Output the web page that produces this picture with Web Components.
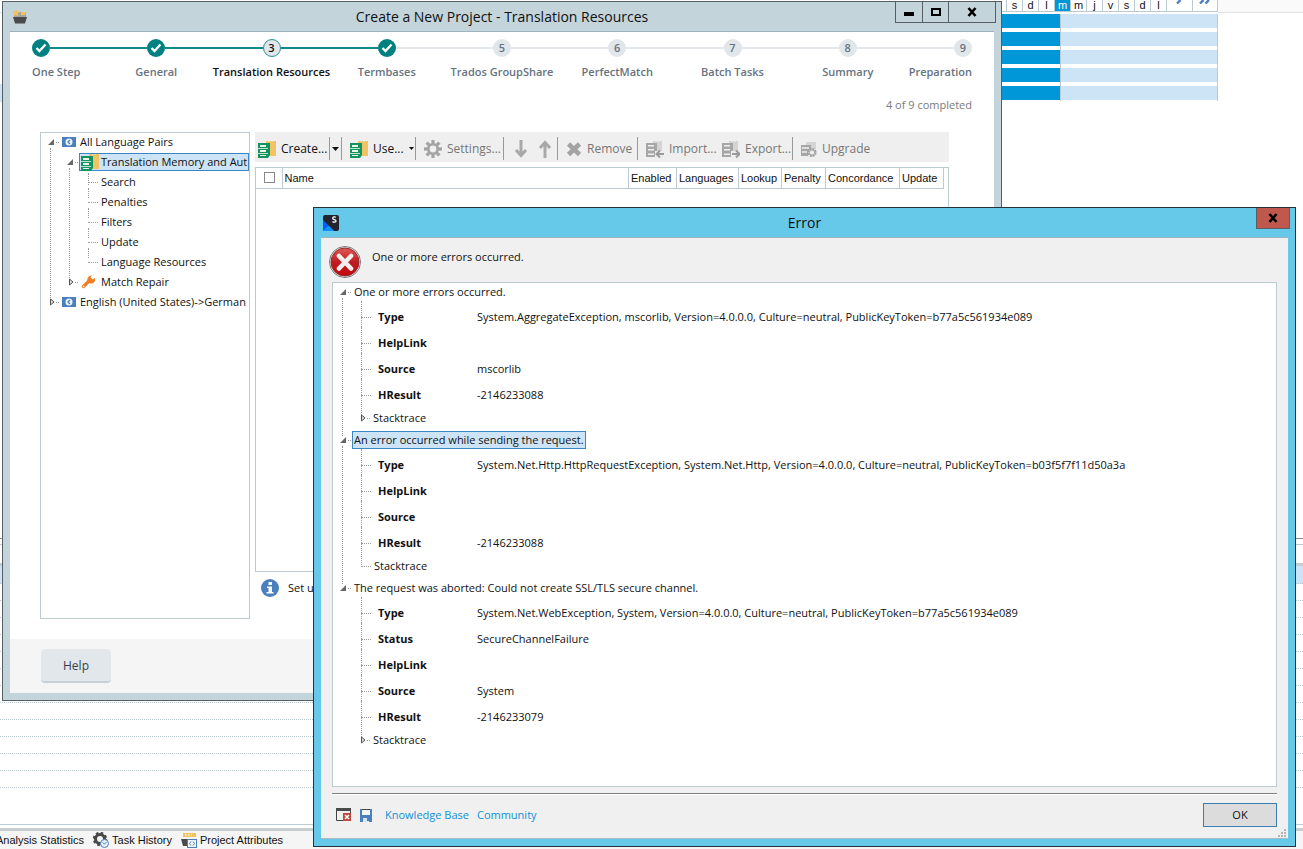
<!DOCTYPE html>
<html lang="en">
<head>
<meta charset="utf-8">
<title>Create a New Project - Translation Resources</title>
<style>
html,body{height:100%}
body{margin:0;overflow:hidden;background:#fff;color:#111;font:11px/20px "Open Sans","Noto Sans",sans-serif}
</style>
</head>
<body>
<work-desk></work-desk>
<script>
const svg = (w, h, body, box) => `<svg width="${w}" height="${h}" viewBox="${box || `0 0 ${w} ${h}`}" aria-hidden="true">${body}</svg>`;

const ICONS = {
  project: svg(16, 15, `<path d="M4 3h10v7H2V5z" fill="#a5a5a5"/><path d="M9 3h5l-1 3H9z" fill="#f2c35b"/><path d="M1 8h14l-2 6.500H3z" fill="#4b4b4b"/><path d="M4 0l1.100 2.400 2.700.3-2 1.800.6 2.700L4 5.900 1.600 7.200l.6-2.700-2-1.800 2.700-.3z" fill="#f2c35b"/>`),
  studio: svg(16, 16, `<rect width="16" height="16" rx="2" fill="#23242f"/><path d="M0 5l11 11H2a2 2 0 0 1-2-2z" fill="#0a5cff"/><path d="M5.500 10.500L11 16H0z" fill="#0a94ff"/>
    <path d="M12.900 2.300C11.700 1.500 9.700 1.700 9.700 3.200c0 1.800 3.300 1 3.300 2.700 0 1.500-2.300 1.500-3.500.7" stroke="#fff" stroke-width="1.300" fill="none"/>`),
  pair: svg(14, 10, `<rect width="14" height="10" fill="#4a80bd"/><circle cx="7" cy="5" r="3.500" fill="#eef3f8"/><path d="M8 3L6 5l2 2" fill="none" stroke="#4a80bd" stroke-width="1.300"/>`),
  memory: svg(18, 18, `<path d="M8 1h2l1 1 1-1h1l1 1 1-1h3v15H8z" fill="#f2c364"/><path d="M0 3h12v12l-2 3H0z" fill="#14935f"/><g fill="#e7f5ee"><rect x="2" y="5" width="6" height="2"/><rect x="2" y="10" width="6" height="2"/><rect x="2" y="15" width="6" height="1"/></g><path d="M0 8.500h10M0 13.500h10" stroke="#bfe3d3" stroke-width="1"/>`),
  wrench: svg(14, 14, `<path d="M2.500 11.500L8.500 5.500" stroke="#ef7d23" stroke-width="3.200" stroke-linecap="round"/><path d="M8 1.600A3.800 3.800 0 0 1 11 .5L9.600 2.600l1.900 1.900L13.700 3A3.800 3.800 0 1 1 8 1.600z" fill="#ef7d23"/><circle cx="2.600" cy="11.400" r=".8" fill="#fff"/>`),
  gear: svg(18, 18, `<g fill="#a3a3a3"><path fill-rule="evenodd" d="M9 3a6 6 0 1 0 0 12A6 6 0 0 0 9 3zm0 2.600a3.400 3.400 0 1 1 0 6.800 3.400 3.400 0 0 1 0-6.800z"/><g><rect x="7.400" y="0" width="3.200" height="4"/><rect x="7.400" y="14" width="3.200" height="4"/></g><g transform="rotate(45 9 9)"><rect x="7.400" y="0" width="3.200" height="4"/><rect x="7.400" y="14" width="3.200" height="4"/></g><g transform="rotate(90 9 9)"><rect x="7.400" y="0" width="3.200" height="4"/><rect x="7.400" y="14" width="3.200" height="4"/></g><g transform="rotate(135 9 9)"><rect x="7.400" y="0" width="3.200" height="4"/><rect x="7.400" y="14" width="3.200" height="4"/></g></g>`),
  down: svg(14, 18, `<path d="M7 0v15M2 10l5 5.500 5-5.500" fill="none" stroke="#a8a8a8" stroke-width="3"/>`),
  up: svg(14, 18, `<path d="M7 18V3M2 8l5-5.500L12 8" fill="none" stroke="#a8a8a8" stroke-width="3"/>`),
  cross: svg(16, 16, `<path d="M2.500 3l11 10.500M13.500 3l-11 10.500" stroke="#a3a3a3" stroke-width="4.600"/>`),
  importTm: svg(18, 18, `<path d="M7 1h2l1 1 1-1h1l1 1 1-1h2v10H7z" fill="#d4d4d4"/><path d="M0 3h11v8H9v6H0z" fill="#a6a6a6"/><g fill="#efefef"><rect x="2" y="5" width="6" height="1.500"/><rect x="2" y="9" width="6" height="1.500"/><rect x="2" y="13.500" width="6" height="1.500"/></g><path d="M18 14h-7M14 10.500L10.500 14l3.500 3.500" fill="none" stroke="#9a9a9a" stroke-width="2"/>`),
  exportTm: svg(18, 18, `<path d="M7 1h2l1 1 1-1h1l1 1 1-1h2v10H7z" fill="#d4d4d4"/><path d="M0 3h11v8H9v6H0z" fill="#a6a6a6"/><g fill="#efefef"><rect x="2" y="5" width="6" height="1.500"/><rect x="2" y="9" width="6" height="1.500"/><rect x="2" y="13.500" width="6" height="1.500"/></g><path d="M10 14h7M14 10.500l3.500 3.500-3.500 3.500" fill="none" stroke="#9a9a9a" stroke-width="2"/>`),
  upgrade: svg(16, 16, `<path d="M5 1h10v7H5z" fill="#d4d4d4"/><path d="M0 4h10v4l-3 3v4H0z" fill="#a6a6a6"/><path d="M1 7h7M1 11h5" stroke="#efefef" stroke-width="1.400"/><circle cx="11" cy="11.500" r="3.600" fill="#efefef" stroke="#a0a0a0" stroke-width="2" stroke-dasharray="2 .8"/><circle cx="11" cy="11.500" r="2.600" fill="#efefef" stroke="#a0a0a0"/>`),
  caret: svg(7, 4, `<path d="M0 0h7L3.500 4z" fill="#111"/>`),
  caretSmall: svg(5, 3, `<path d="M0 0h5L2.500 3z" fill="#111"/>`),
  info: svg(18, 18, `<circle cx="9" cy="9" r="9" fill="#4a80bd"/><g fill="#fff"><rect x="7.500" y="3" width="3.500" height="3"/><path d="M6 7.500h5V13h1.500v1.500h-7V13h2V9H6z"/></g>`),
  tick: svg(18, 18, `<circle cx="9" cy="9" r="9" fill="#008080"/><path d="M4.500 9l3 3 6-6.500" fill="none" stroke="#fff" stroke-width="2.400"/>`),
  error: svg(32, 32, `<defs><linearGradient id="r" x1="0" y1="0" x2="0" y2="1"><stop offset="0" stop-color="#e05a55"/><stop offset=".5" stop-color="#c01c22"/><stop offset="1" stop-color="#c4090c"/></linearGradient></defs><circle cx="16" cy="16" r="15.500" fill="#f4f4f4" stroke="#777"/><circle cx="16" cy="16" r="14" fill="url(#r)" stroke="#8d2a2c"/><path d="M10 10l12 12.500M22 10L10 22.500" stroke="#f3efee" stroke-width="4.600" stroke-linecap="round"/>`),
  report: svg(16, 14, `<path d="M.5 1v11.500H7M14.500 1v4" fill="none" stroke="#444"/><rect width="15" height="3" fill="#4a4a4a"/><rect x="7" y="5" width="8" height="8" fill="#c0453a"/><path d="M9 7l4 4M13 7l-4 4" stroke="#fff" stroke-width="1.500"/>`),
  save: svg(12, 13, `<path d="M0 0h12v13H0z" fill="#4a80bd"/><rect x="2" width="8" height="6" fill="#f6f6f6"/><path d="M2 .5h8" stroke="#444"/><rect x="3" y="9" width="6" height="4" fill="#dce6f1"/><rect x="7" y="9" width="2" height="3" fill="#4a80bd"/>`),
  grip: svg(9, 9, `<g fill="#b4b4b4"><path d="M6 0h2v2H6zM3 3h2v2H3zM6 3h2v2H6zM0 6h2v2H0zM3 6h2v2H3zM6 6h2v2H6z"/></g>`),
  history: svg(16, 16, `<circle cx="7" cy="7" r="4.500" fill="none" stroke="#484848" stroke-width="3"/><circle cx="7" cy="7" r="6" fill="none" stroke="#484848" stroke-width="2.400" stroke-dasharray="2.500 2.200"/><circle cx="11.500" cy="11.500" r="4" fill="#e9f1f9" stroke="#4a80bd"/><path d="M9.500 10.500l2 1.500 2-2" fill="none" stroke="#4a80bd"/>`),
  attributes: svg(16, 16, `<path d="M2 1h13v4H2z" fill="#f2c35b"/><path d="M4 3h7" stroke="#fff" stroke-dasharray="2 1"/><path d="M0 7h6v7H2z" fill="#4b4b4b"/><rect x="6.500" y="7.500" width="9" height="8" fill="#eef4fa" stroke="#4a80bd"/><path d="M10 9.500L8.500 11.500l1.500 2M12 9.500l1.500 2-1.500 2" fill="none" stroke="#4a80bd"/>`),
  next: svg(6, 4, `<path d="M1 3.500L4.500 0" stroke="#4a80bd" stroke-width="2.400"/>`),
  last: svg(12, 4, `<path d="M1 3.500L4.500 0M6.500 3.500L10 0" stroke="#4a80bd" stroke-width="2.400"/>`),
  minus: svg(10, 10, `<rect y="5" width="10" height="4"/>`),
  square: svg(10, 10, `<rect x="1" y="2" width="8" height="6" fill="none" stroke="#000" stroke-width="2"/>`),
  close: svg(10, 10, `<path d="M1.500 1l7 8M8.500 1l-7 8" stroke="#000" stroke-width="2.600"/>`),
  open: svg(7, 6, `<path d="M6 0v6H0z" fill="#666"/>`),
  shut: svg(6, 8, `<path d="M1.500 1v6l3.500-3z" fill="#ddd" stroke="#555"/>`)
};

function define(name, markup, setup) {
  const template = document.createElement('template');
  template.innerHTML = `<style>*{box-sizing:border-box}svg{display:block;flex:none}button{font:inherit;color:inherit}</style>${markup}`;
  customElements.define(name, class extends HTMLElement {
    constructor() {
      super();
      this.attachShadow({ mode: 'open' }).append(template.content.cloneNode(true));
    }
    connectedCallback() {
      if (this.ready) return;
      this.ready = true;
      if (setup) setup(this, this.shadowRoot);
    }
  });
}

define('ui-icon', `<style>:host{display:block;flex:none}</style><span></span>`, (host, root) => {
  root.querySelector('span').innerHTML = ICONS[host.getAttribute('name')] || '';
});

/* Window frame with a title bar and caption buttons */
define('app-window', `
<style>
:host{display:flex;flex-direction:column;box-sizing:border-box;border:1px solid #555f65;background:var(--chrome);padding:0 7px 7px}
header{display:grid;grid-template-columns:1fr auto 1fr;height:29px;flex:none}
h1{margin:0;font-size:14px;line-height:29px;font-weight:400;color:#111;white-space:nowrap}
.logo{padding:7px 2px}
.caption{display:flex;justify-content:flex-end;align-items:flex-start;margin-right:-2px}
.caption button{display:flex;align-items:center;justify-content:center;height:21px;padding:0;border:1px solid #555f65;border-top:0;background:var(--close,transparent);width:28px;margin-left:-1px}
.caption .max{width:27px}
.caption .x{width:var(--x,48px)}
:host([kind=dialog]) .min,:host([kind=dialog]) .max{display:none}
.body{flex:1;display:flex;flex-direction:column;min-height:0;border-top:1px solid #9db3bd;border-bottom:1px solid #aab9bf;background:var(--body)}
</style>
<header><div class="logo"></div><h1></h1>
<div class="caption"><button class="min" aria-label="Minimize"><ui-icon name="minus"></ui-icon></button><button class="max" aria-label="Maximize"><ui-icon name="square"></ui-icon></button><button class="x" aria-label="Close"><ui-icon name="close"></ui-icon></button></div></header>
<div class="body"><slot></slot></div>`, (host, root) => {
  root.querySelector('h1').textContent = host.getAttribute('heading');
  root.querySelector('.logo').innerHTML = `<ui-icon name="${host.getAttribute('icon')}"></ui-icon>`;
});

/* Wizard progress */
define('step-bar', `
<style>
:host{display:block}
ol{display:flex;margin:0;padding:0;list-style:none}
li{width:18px;height:45px;display:flex;flex-direction:column;align-items:center;gap:5px;font-weight:600;color:#66737f;white-space:nowrap}
li:first-of-type{align-items:flex-start}li:last-of-type{align-items:flex-end}
.rail{flex:1;width:auto;height:2px;margin-top:8px;background:#e4e8ec}
.rail.done{background:#0e8a8a}
.dot{width:18px;height:18px;border-radius:50%;background:#e1e6ea;line-height:18px;text-align:center;flex:none}
.now .dot{border:1px solid #2b8f92;line-height:16px}
.now{color:#111}
</style><ol></ol>`, (host, root) => {
  const steps = ['One Step', 'General', 'Translation Resources', 'Termbases', 'Trados GroupShare', 'PerfectMatch', 'Batch Tasks', 'Summary', 'Preparation'];
  root.querySelector('ol').innerHTML = steps.map((s, i) => {
    const done = i < 4 && i !== 2;
    return `${i ? `<div class="rail${i < 4 ? ' done' : ''}" role="presentation"></div>` : ''}<li${i === 2 ? ' class="now" aria-current="step"' : ''}>${done ? ICONS.tick : `<span class="dot">${i + 1}</span>`}<span>${s}</span></li>`;
  }).join('');
});

/* Tree node: toggle, connector, icon slot, label; nested nodes go in the default slot */
define('tree-node', `
<style>
:host{display:block;position:relative;white-space:nowrap;--line:1px dotted #999}
.row{display:flex;align-items:center;height:20px;padding-bottom:2px}
:host([tall]) .row{height:22px;padding-bottom:4px}
:host([leaf]) .row::before{content:"";width:10px;margin:0 1px 0 2px;border-top:var(--line);flex:none}
.toggle{width:7px;height:8px;display:flex;align-items:center;justify-content:center;padding:0;border:0;background:none;flex:none}
.stub{width:3px;margin:0 1px;border-top:var(--line);flex:none}
:host([leaf]) .toggle,:host([leaf]) .stub{display:none}
.mark{display:flex;align-items:center;height:18px;line-height:16px;padding:0 1px;border:1px solid transparent}
:host([selected]) .mark{background:#cde4f7;border-color:#3a87c4}
::slotted([slot=icon]){margin-right:var(--icon-gap,4px)}
.kids{padding-left:19px}
:host(:not([last]))::after{content:"";position:absolute;left:2px;top:15px;bottom:-5px;border-left:var(--line)}
</style>
<div class="row"><button class="toggle"></button><span class="stub"></span><span class="mark"><slot name="icon"></slot><span class="label"></span></span></div>
<div class="kids"><slot></slot></div>`, (host, root) => {
  root.querySelector('.label').textContent = host.getAttribute('label');
  const toggle = root.querySelector('.toggle');
  toggle.innerHTML = ICONS[host.hasAttribute('closed') ? 'shut' : 'open'];
  toggle.setAttribute('aria-label', 'Toggle ' + host.getAttribute('label'));
});

define('resource-tree', `
<style>:host{display:block;box-sizing:border-box;border:1px solid #bccbd2;overflow:hidden;padding-left:7px}
.leaves{position:relative}
.leaves::before{content:"";position:absolute;left:2px;top:0;height:12px;border-left:1px dotted #999}
.wide{--icon-gap:6px}.book{--icon-gap:2px}</style>
<tree-node label="All Language Pairs"><ui-icon slot="icon" name="pair"></ui-icon>
  <tree-node class="book" label="Translation Memory and Aut" selected><ui-icon slot="icon" name="memory"></ui-icon>
    <div class="leaves">
    <tree-node leaf label="Search"></tree-node>
    <tree-node leaf label="Penalties"></tree-node>
    <tree-node leaf label="Filters"></tree-node>
    <tree-node leaf label="Update"></tree-node>
    <tree-node leaf last label="Language Resources"></tree-node>
    </div>
  </tree-node>
  <tree-node class="wide" closed last label="Match Repair"><ui-icon slot="icon" name="wrench"></ui-icon></tree-node>
</tree-node>
<tree-node closed last label="English (United States)-&gt;German"><ui-icon slot="icon" name="pair"></ui-icon></tree-node>`);

define('tool-bar', `
<style>
:host{display:flex;height:30px;background:#efefef;font-size:12px;color:#111}
button{display:flex;align-items:center;gap:5px;padding:3px 0 0 8px;border:0;background:linear-gradient(#999,#999) right 5px/1px 23px no-repeat;white-space:nowrap;line-height:20px}
button:disabled{color:#777}
button.plain{background:none}
.w1{width:75px;padding-left:3px}.w2{width:12px;padding-left:2px}.w3{width:74px}.w4{width:88px}.w5{width:28px;padding-left:10px}.w6{width:26px;padding-left:6px}.w7{width:80px}.w8{width:76px}.w9{width:79px}
</style>
<button class="w1"><ui-icon name="memory"></ui-icon>Create...</button><button class="w2" aria-label="More create options"><ui-icon name="caret"></ui-icon></button>
<button class="w3"><ui-icon name="memory"></ui-icon>Use...<ui-icon name="caretSmall"></ui-icon></button>
<button class="w4" disabled><ui-icon name="gear"></ui-icon>Settings...</button>
<button class="w5 plain" disabled aria-label="Move down"><ui-icon name="down"></ui-icon></button><button class="w6" disabled aria-label="Move up"><ui-icon name="up"></ui-icon></button>
<button class="w7" disabled><ui-icon name="cross"></ui-icon>Remove</button>
<button class="w8 plain" disabled><ui-icon name="importTm"></ui-icon>Import...</button>
<button class="w9" disabled><ui-icon name="exportTm"></ui-icon>Export...</button>
<button class="plain" disabled><ui-icon name="upgrade"></ui-icon>Upgrade</button>`);

define('memory-list', `
<style>
:host{display:block;border:1px solid #bccbd2;padding-right:4px;font:11px/20px "Liberation Sans",sans-serif}
table{width:100%;table-layout:fixed;border-collapse:collapse}
th{height:20px;padding:0 0 0 2px;font-weight:400;text-align:left;border-right:1px solid #bccbd2;border-bottom:1px solid #bccbd2;white-space:nowrap}
input{display:block;appearance:none;width:11px;height:11px;margin:0 0 1px 6px;border:1px solid #888;background:#fff}
.c{width:26px}.e{width:48px}.l{width:62px}.k{width:43px}.p{width:44px}.o{width:74px}.u{width:44px}
</style>
<table><thead><tr><th class="c"><input type="checkbox" aria-label="Select all"></th><th>Name</th><th class="e">Enabled</th><th class="l">Languages</th><th class="k">Lookup</th><th class="p">Penalty</th><th class="o">Concordance</th><th class="u">Update</th></tr></thead></table>`);

define('project-wizard', `
<style>
:host{display:flex;flex-direction:column;flex:1}
step-bar{margin:7px 22px 0}
.count{margin:0;padding:11px 22px 17px;text-align:right;color:#7a7a7a;line-height:20px}
.main{display:flex;gap:5px;padding:0 45px 20px 30px}
resource-tree{width:210px;height:487px;flex:none}
.right{flex:1;min-width:0;display:flex;flex-direction:column}
memory-list{height:405px;margin-top:5px}
.info{display:flex;align-items:center;gap:9px;padding:7px 6px;line-height:18px}
footer{padding:10px 31px;background:#f5f5f5;flex:1}
footer button{width:70px;height:34px;padding:2px 0 0;border:0;border-bottom:2px solid #c9d0d5;border-radius:4px;background:#e1e7eb;font-size:12px;color:#333f4a}
</style>
<step-bar></step-bar>
<p class="count">4 of 9 completed</p>
<div class="main"><resource-tree></resource-tree>
<div class="right"><tool-bar></tool-bar><memory-list></memory-list><div class="info"><ui-icon name="info"></ui-icon><span>Set up</span></div></div></div>
<footer><button>Help</button></footer>`);

/* One named exception property hanging off the tree line */
define('error-field', `
<style>
:host{display:grid;grid-template-columns:17px 99px 1fr;align-items:center;height:26px;padding-bottom:2px;position:relative;white-space:nowrap;padding-left:2px}
:host::after{content:"";position:absolute;left:2px;top:-4px;bottom:-10px;border-left:1px dotted #999}
i{width:10px;border-top:1px dotted #999}
b{font-weight:700}
</style><i></i><b></b><span></span>`, (host, root) => {
  root.querySelector('b').textContent = host.getAttribute('name');
  root.querySelector('span').textContent = host.getAttribute('value') || '';
});

define('error-tree', `
<style>
:host{display:block;box-sizing:border-box;border:1px solid #bccbd2;background:#fff;padding-left:7px;overflow:hidden}
</style><div></div>`, (host, root) => {
  const groups = [
    ['One or more errors occurred.', [['Type', 'System.AggregateException, mscorlib, Version=4.0.0.0, Culture=neutral, PublicKeyToken=b77a5c561934e089'], ['HelpLink'], ['Source', 'mscorlib'], ['HResult', '-2146233088']], 'closed'],
    ['An error occurred while sending the request.', [['Type', 'System.Net.Http.HttpRequestException, System.Net.Http, Version=4.0.0.0, Culture=neutral, PublicKeyToken=b03f5f7f11d50a3a'], ['HelpLink'], ['Source'], ['HResult', '-2146233088']], 'leaf'],
    ['The request was aborted: Could not create SSL/TLS secure channel.', [['Type', 'System.Net.WebException, System, Version=4.0.0.0, Culture=neutral, PublicKeyToken=b77a5c561934e089'], ['Status', 'SecureChannelFailure'], ['HelpLink'], ['Source', 'System'], ['HResult', '-2146233079']], 'closed']
  ];
  root.querySelector('div').innerHTML = groups.map(([title, fields, end], i) =>
    `<tree-node tall label="${title}"${i === 1 ? ' selected' : ''}${i === 2 ? ' last' : ''}>${fields.map(([n, v]) => `<error-field name="${n}" value="${v || ''}"></error-field>`).join('')}<tree-node tall last ${end} label="Stacktrace"></tree-node></tree-node>`).join('');
});

define('error-report', `
<style>
:host{display:flex;flex-direction:column;flex:1}
.top{display:flex;gap:11px;padding:8px 8px 0;height:44px}
.top p{margin:1px 0 0}
error-tree{height:505px;margin:0 11px 6px}
footer{display:flex;align-items:center;margin:0 11px;border-top:1px solid #808080;box-shadow:inset 0 1px #fff;padding:9px 0 11px 4px}
ui-icon+ui-icon{margin-left:8px}
a{color:#0f90d8;text-decoration:none;margin-right:8px}
a:first-of-type{margin-left:13px}
button{margin-left:auto;width:74px;height:24px;padding:0;border:1px solid #3c7fb1;background:#dcdcdc;line-height:20px}
.grip{position:absolute;right:8px;bottom:8px}
</style>
<div class="top"><ui-icon name="error"></ui-icon><p>One or more errors occurred.</p></div>
<error-tree></error-tree>
<footer><ui-icon name="report"></ui-icon><ui-icon name="save"></ui-icon><a href="#kb">Knowledge Base</a><a href="#community">Community</a><button>OK</button></footer>
<ui-icon class="grip" name="grip"></ui-icon>`);

define('week-chart', `
<style>
:host{display:block;width:216px;font:11px/11px "Liberation Sans",sans-serif}
.days{display:flex;height:12px;border-bottom:1px solid #bccbd2;margin-bottom:2px}
.days span{width:16px;text-align:center;border-right:1px solid #bccbd2;flex:none;line-height:11px}
.days .now{background:#0097d9;color:#fff}
.days b{flex:1;border-right:1px solid #bccbd2;display:flex;justify-content:center}
.bars{display:grid;gap:4px;border-right:1px solid #bccbd2;padding-bottom:1px;background:linear-gradient(#bccbd2,#bccbd2) 58px 0/1px 100% no-repeat}
.bars i{height:14px;background:linear-gradient(90deg,#0097d9 58px,transparent 58px 59px,#cde4f7 59px)}
</style>
<div class="days"></div><div class="bars"><i></i><i></i><i></i><i></i><i></i></div>`, (host, root) => {
  root.querySelector('.days').innerHTML = '<span style="width:5px"></span>' + [...'sdlmmjvsdl'].map((d, i) => `<span${i === 3 ? ' class="now"' : ''}>${d}</span>`).join('') + `<b>${ICONS.next}</b><b>${ICONS.last}</b>`;
});

define('project-view', `
<style>
:host{display:flex;flex-direction:column;height:100%;background:#fff}
.top{display:flex;justify-content:flex-end}
.top::after{content:"";width:85px;height:12px;border-bottom:1px solid #e2e2e2;background:#fafafa}
.top::before{content:"";flex:1;height:12px;border-bottom:1px solid #d8dfe3}
.hint{height:18px;width:20px;background:#cde4f7;margin-top:-17px}
.gap{flex:1}
.head{border-top:1px solid #888;padding-top:5px}
.head div{border-top:1px solid #bccbd2;height:19px;background:#fff}
.rows{border-top:3px solid #c8cdd0}
.rows div{height:17px;border-bottom:1px dotted #bccbd2}
.rows div:first-child{height:18px;background:#cde4f7}
.end{height:43px;border-bottom:3px solid #c8cdd0;background:linear-gradient(#bccbd2,#bccbd2) 0 36px/100% 1px no-repeat}
nav{display:flex;align-items:center;gap:9px;height:18px;margin-left:-4px;background:#f5f5f5;font:11px/18px "Liberation Sans",sans-serif;white-space:nowrap}
nav a{display:flex;align-items:center;gap:3px;color:#111;text-decoration:none}
</style>
<div class="top"><week-chart></week-chart></div><div class="hint"></div>
<div class="gap"></div>
<div class="head"><div></div></div>
<div class="rows"><div></div><div></div><div></div><div></div><div></div><div></div><div></div><div></div><div></div><div></div><div></div><div></div><div></div></div>
<div class="end"></div>
<nav><a href="#stats">Analysis Statistics</a><a href="#history"><ui-icon name="history"></ui-icon>Task History</a><a href="#attributes"><ui-icon name="attributes"></ui-icon>Project Attributes</a></nav>`);

/* Desktop: the main view with two windows lying over it */
define('work-desk', `
<style>
:host{display:block;position:relative;height:100%;overflow:hidden}
.wizard{position:absolute;left:2px;top:1px;right:301px;height:700px;--chrome:#c3d5db;--body:#fff}
.error{position:absolute;left:313px;top:207px;right:7px;--chrome:#66c9ea;--body:#f0f0f0;--close:#c1584e;--x:34px;border-color:#26323a}
</style>
<project-view></project-view>
<app-window class="wizard" icon="project" heading="Create a New Project - Translation Resources"><project-wizard></project-wizard></app-window>
<app-window class="error" kind="dialog" icon="studio" heading="Error"><error-report></error-report></app-window>`);
</script>
</body>
</html>
